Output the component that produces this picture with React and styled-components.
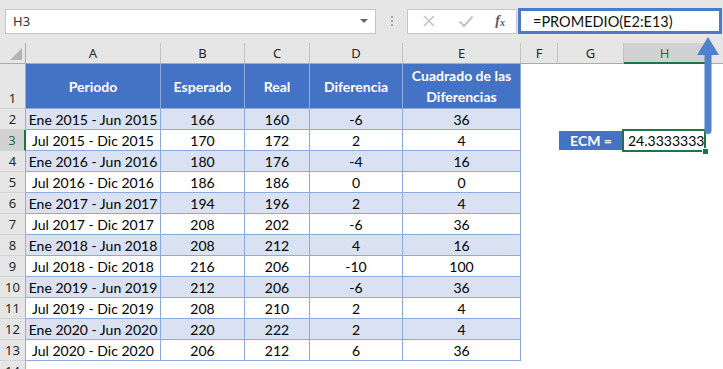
import React from 'react';
import styled, { createGlobalStyle } from 'styled-components';

const GlobalStyle = createGlobalStyle`
  html, body {
    margin: 0;
    padding: 0;
    background: #ffffff;
  }
  * {
    box-sizing: border-box;
  }
`;

// column widths include the 1px grid line on the right
const COLUMNS = [
  { key: 'A', width: 135 },
  { key: 'B', width: 84 },
  { key: 'C', width: 65 },
  { key: 'D', width: 93 },
  { key: 'E', width: 118 },
  { key: 'F', width: 37 },
  { key: 'G', width: 66 },
  { key: 'H', width: 82 },
];

const rows = [
  ['Ene 2015 - Jun 2015', 166, 160, -6, 36],
  ['Jul 2015 - Dic 2015', 170, 172, 2, 4],
  ['Ene 2016 - Jun 2016', 180, 176, -4, 16],
  ['Jul 2016 - Dic 2016', 186, 186, 0, 0],
  ['Ene 2017 - Jun 2017', 194, 196, 2, 4],
  ['Jul 2017 - Dic 2017', 208, 202, -6, 36],
  ['Ene 2018 - Jun 2018', 208, 212, 4, 16],
  ['Jul 2018 - Dic 2018', 216, 206, -10, 100],
  ['Ene 2019 - Jun 2019', 212, 206, -6, 36],
  ['Jul 2019 - Dic 2019', 208, 210, 2, 4],
  ['Ene 2020 - Jun 2020', 220, 222, 2, 4],
  ['Jul 2020 - Dic 2020', 206, 212, 6, 36],
];

const App = () => {
  return (
    <>
      <GlobalStyle />
      <Sheet>
        <Toolbar>
          <NameBox>
            H3
            <Caret />
          </NameBox>
          <Grip>
            <Dot />
            <Dot />
            <Dot />
          </Grip>
          <FnBox>
            <svg width="14" height="14" viewBox="0 0 14 14">
              <path d="M2 2 L12 12 M12 2 L2 12" stroke="#c4c4c4" strokeWidth="1.6" fill="none" />
            </svg>
            <svg width="16" height="14" viewBox="0 0 16 14">
              <path d="M1.5 7.5 L6 12 L14.5 2.5" stroke="#c4c4c4" strokeWidth="2" fill="none" />
            </svg>
            <FxLabel>
              f<sub>x</sub>
            </FxLabel>
          </FnBox>
          <FormulaBox>=PROMEDIO(E2:E13)</FormulaBox>
        </Toolbar>

        <ColumnHeaderRow>
          <Corner>
            <CornerTriangle />
          </Corner>
          {COLUMNS.map(c => (
            <ColHeader key={c.key} $width={c.width} $active={c.key === 'H'}>
              {c.key}
            </ColHeader>
          ))}
        </ColumnHeaderRow>

        <Row $height={45}>
          <RowHeader $bottom>1</RowHeader>
          <HeadCell $width={135}>Periodo</HeadCell>
          <HeadCell $width={84}>Esperado</HeadCell>
          <HeadCell $width={65}>Real</HeadCell>
          <HeadCell $width={93}>Diferencia</HeadCell>
          <HeadCell $width={118}>
            Cuadrado de las
            <br />
            Diferencias
          </HeadCell>
        </Row>

        {rows.map((r, i) => {
          const n = i + 2;
          const band = n % 2 === 0;
          return (
            <Row key={n} $height={21}>
              <RowHeader $active={n === 3}>{n}</RowHeader>
              {r.map((v, j) => (
                <Cell key={j} $width={COLUMNS[j].width} $band={band}>
                  {v}
                </Cell>
              ))}
              {n === 3 && (
                <>
                  <Blank $width={37} />
                  <LabelCell $width={66}>
                    <Label>ECM =</Label>
                  </LabelCell>
                  <ValueCell $width={82}>
                    24.3333333
                    <Selection />
                    <FillHandle />
                  </ValueCell>
                </>
              )}
            </Row>
          );
        })}

        <Row $height={21}>
          <RowHeader>14</RowHeader>
        </Row>

        <Arrow width="26" height="102" viewBox="0 0 26 102">
          <path d="M13 1 L2 19 L24 19 Z" fill="#5081cd" />
          <rect x="9.5" y="16" width="7" height="82" rx="3.5" fill="#5081cd" />
        </Arrow>
      </Sheet>
    </>
  );
};

export default App;

const Sheet = styled.div`
  position: relative;
  width: 723px;
  height: 369px;
  overflow: hidden;
  background: #ffffff;
  font-family: Lato, 'Liberation Sans', sans-serif;
`;

const Toolbar = styled.div`
  display: flex;
  align-items: center;
  height: 43px;
  padding: 0 1px 1px 5px;
  background: #e6e6e6;
`;

const NameBox = styled.div`
  display: flex;
  align-items: center;
  justify-content: space-between;
  width: 371px;
  height: 25px;
  padding: 0 7px 0 7px;
  background: #ffffff;
  border: 1px solid #c6c6c6;
  font-family: 'Noto Sans', sans-serif;
  font-size: 13px;
  color: #333333;
`;

const Caret = styled.span`
  width: 0;
  height: 0;
  border-left: 4px solid transparent;
  border-right: 4px solid transparent;
  border-top: 4px solid #666666;
`;

const Grip = styled.div`
  display: flex;
  flex-direction: column;
  align-items: center;
  gap: 2px;
  width: 31px;
`;

const Dot = styled.span`
  width: 2px;
  height: 2px;
  background: #a6a6a6;
`;

const FnBox = styled.div`
  display: flex;
  align-items: center;
  justify-content: space-between;
  width: 110px;
  height: 25px;
  padding: 0 11px 0 14px;
  background: #ffffff;
  border: 1px solid #c6c6c6;
`;

const FxLabel = styled.span`
  font-family: 'Liberation Serif', serif;
  font-style: italic;
  font-weight: bold;
  font-size: 14px;
  color: #595959;

  sub {
    font-size: 10px;
    vertical-align: -1px;
  }
`;

const FormulaBox = styled.div`
  display: flex;
  align-items: center;
  flex: 1;
  height: 26px;
  margin-left: 1px;
  padding-left: 12px;
  background: #ffffff;
  border: 3px solid #4a7bcb;
  font-size: 14.5px;
  color: #111111;
`;

const ColumnHeaderRow = styled.div`
  display: flex;
  height: 21px;
  background: #e6e6e6;
  border-bottom: 1px solid #ababab;
`;

const Corner = styled.div`
  position: relative;
  flex: none;
  width: 26px;
  border-right: 1px solid #ababab;
`;

const CornerTriangle = styled.span`
  position: absolute;
  right: 3px;
  bottom: 3px;
  width: 0;
  height: 0;
  border-left: 12px solid transparent;
  border-bottom: 12px solid #b4b4b4;
`;

const ColHeader = styled.div`
  display: flex;
  align-items: center;
  justify-content: center;
  flex: none;
  width: ${p => p.$width}px;
  border-right: 1px solid #c2c2c2;
  border-bottom: ${p => (p.$active ? '2px solid #217346' : 'none')};
  margin-bottom: ${p => (p.$active ? '-1px' : '0')};
  background: ${p => (p.$active ? '#d2d2d2' : 'transparent')};
  color: ${p => (p.$active ? '#217346' : '#262626')};
  font-family: 'Noto Sans', sans-serif;
  font-size: 13px;
`;

const Row = styled.div`
  display: flex;
  height: ${p => p.$height}px;
`;

const RowHeader = styled.div`
  display: flex;
  align-items: ${p => (p.$bottom ? 'flex-end' : 'center')};
  justify-content: center;
  flex: none;
  width: 26px;
  padding-bottom: ${p => (p.$bottom ? '1px' : '0')};
  background: ${p => (p.$active ? '#d2d2d2' : '#e6e6e6')};
  border-right: ${p => (p.$active ? '2px solid #217346' : '1px solid #ababab')};
  border-bottom: 1px solid #d4d4d4;
  color: ${p => (p.$active ? '#217346' : '#262626')};
  font-family: 'Noto Sans', sans-serif;
  font-size: 13px;
`;

const Cell = styled.div`
  display: flex;
  align-items: center;
  justify-content: center;
  flex: none;
  width: ${p => p.$width}px;
  background: ${p => (p.$band ? '#d9e1f2' : '#ffffff')};
  border-right: 1px solid #8ea9db;
  border-bottom: 1px solid #8ea9db;
  font-size: 14px;
  color: #000000;
  white-space: nowrap;
`;

const HeadCell = styled(Cell)`
  background: #4472c4;
  color: #ffffff;
  font-weight: bold;
  text-align: center;
  line-height: 21px;
`;

const Blank = styled.div`
  flex: none;
  width: ${p => p.$width}px;
`;

const LabelCell = styled.div`
  display: flex;
  flex: none;
  width: ${p => p.$width}px;
  padding: 1px;
`;

const Label = styled.div`
  display: flex;
  align-items: center;
  justify-content: center;
  flex: 1;
  background: #4472c4;
  color: #ffffff;
  font-weight: bold;
  font-size: 14px;
`;

const ValueCell = styled.div`
  position: relative;
  display: flex;
  align-items: center;
  flex: none;
  width: ${p => p.$width}px;
  padding-left: 4px;
  font-size: 14px;
  color: #000000;
`;

const Selection = styled.span`
  position: absolute;
  left: -2px;
  top: -1px;
  right: 0;
  bottom: -1px;
  border: 2px solid #217346;
`;

const FillHandle = styled.span`
  position: absolute;
  right: -3px;
  bottom: -4px;
  width: 7px;
  height: 7px;
  background: #217346;
  border: 1px solid #ffffff;
`;

const Arrow = styled.svg`
  position: absolute;
  left: 695px;
  top: 36px;
`;
